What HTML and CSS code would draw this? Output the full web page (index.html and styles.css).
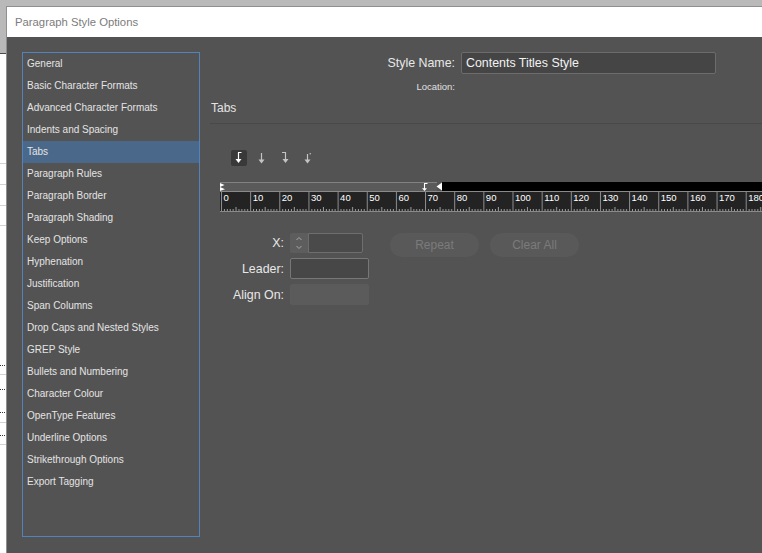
FILE: index.html
```html
<!DOCTYPE html>
<html>
<head>
<meta charset="utf-8">
<title>Paragraph Style Options</title>
<link rel="stylesheet" href="styles.css">
</head>
<body>
<div class="screen">
  <div class="doc">
    <svg width="6" height="500" viewBox="0 0 6 500">
      <rect x="0" y="0" width="6" height="1" fill="#4a4a4a"/>
      <rect x="0" y="110" width="6" height="1" fill="#d2d2d2"/>
      <rect x="0" y="131" width="6" height="1" fill="#d2d2d2"/>
      <rect x="0" y="152" width="6" height="1" fill="#d2d2d2"/>
      <rect x="0" y="172" width="6" height="1" fill="#d2d2d2"/>
      <line x1="0" y1="312.5" x2="6" y2="312.5" stroke="#333" stroke-dasharray="1 1"/>
      <rect x="0" y="321" width="6" height="1" fill="#d2d2d2"/>
      <line x1="0" y1="336.5" x2="6" y2="336.5" stroke="#333" stroke-dasharray="1 1"/>
      <line x1="0" y1="359.5" x2="6" y2="359.5" stroke="#333" stroke-dasharray="1 1"/>
      <rect x="0" y="369" width="6" height="1" fill="#d2d2d2"/>
      <line x1="0" y1="382.5" x2="6" y2="382.5" stroke="#333" stroke-dasharray="1 1"/>
      <rect x="0" y="391" width="6" height="1" fill="#d2d2d2"/>
    </svg>
  </div>
  <div class="dialog">
    <div class="titlebar">Paragraph Style Options</div>
    <div class="body">
      <ul class="nav">
        <li>General</li>
        <li>Basic Character Formats</li>
        <li>Advanced Character Formats</li>
        <li>Indents and Spacing</li>
        <li class="sel">Tabs</li>
        <li>Paragraph Rules</li>
        <li>Paragraph Border</li>
        <li>Paragraph Shading</li>
        <li>Keep Options</li>
        <li>Hyphenation</li>
        <li>Justification</li>
        <li>Span Columns</li>
        <li>Drop Caps and Nested Styles</li>
        <li>GREP Style</li>
        <li>Bullets and Numbering</li>
        <li>Character Colour</li>
        <li>OpenType Features</li>
        <li>Underline Options</li>
        <li>Strikethrough Options</li>
        <li>Export Tagging</li>
      </ul>
      <div class="panel">
        <div class="name-row">
          <span class="lbl">Style Name:</span>
          <div class="name-field">Contents Titles Style</div>
        </div>
        <div class="loc-row"><span class="loc">Location:</span></div>
        <div class="section">Tabs</div>
        <div class="sep"></div>
        <div class="tabtools">
          <span class="tool on">
            <svg width="16" height="16" viewBox="0 0 16 16">
              <path d="M7.5 2.5 V10 M7 2.5 H10.5" stroke="#fff" stroke-width="1.2" fill="none"/>
              <polygon points="4.5,9 10.5,9 7.5,13" fill="#fff"/>
            </svg>
          </span>
          <span class="tool">
            <svg width="16" height="16" viewBox="0 0 16 16">
              <path d="M7.5 3 V10" stroke="#c4c4c4" stroke-width="1.2" fill="none"/>
              <polygon points="4.5,9.5 10.5,9.5 7.5,13.5" fill="#c4c4c4"/>
            </svg>
          </span>
          <span class="tool">
            <svg width="16" height="16" viewBox="0 0 16 16">
              <path d="M8.5 2.5 V10 M5 2.5 H9" stroke="#c4c4c4" stroke-width="1.2" fill="none"/>
              <polygon points="5.5,9 11.5,9 8.5,13" fill="#c4c4c4"/>
            </svg>
          </span>
          <span class="tool">
            <svg width="16" height="16" viewBox="0 0 16 16">
              <path d="M7.5 4 V10" stroke="#c4c4c4" stroke-width="1.2" fill="none"/>
              <rect x="9.6" y="3" width="1.2" height="1.4" fill="#c4c4c4"/>
              <polygon points="4.5,9.5 10.5,9.5 7.5,13.5" fill="#c4c4c4"/>
            </svg>
          </span>
        </div>
        <svg class="ruler" width="542" height="30" viewBox="0 0 542 30">
          <defs>
            <pattern id="ticks" x="1" y="0" width="29.15" height="30" patternUnits="userSpaceOnUse">
              <rect x="0" y="9" width="1" height="21" fill="#8e8e8e"/>
              <rect x="2.9" y="27" width="1" height="2" fill="#a0a0a0"/>
              <rect x="5.8" y="27" width="1" height="2" fill="#a0a0a0"/>
              <rect x="8.7" y="27" width="1" height="2" fill="#a0a0a0"/>
              <rect x="11.6" y="27" width="1" height="2" fill="#a0a0a0"/>
              <rect x="14.5" y="25" width="1" height="4" fill="#a0a0a0"/>
              <rect x="17.4" y="27" width="1" height="2" fill="#a0a0a0"/>
              <rect x="20.3" y="27" width="1" height="2" fill="#a0a0a0"/>
              <rect x="23.2" y="27" width="1" height="2" fill="#a0a0a0"/>
              <rect x="26.1" y="27" width="1" height="2" fill="#a0a0a0"/>
            </pattern>
          </defs>
          <rect x="0" y="0" width="217" height="9" fill="#5a5a5a"/>
          <rect x="0" y="0" width="217" height="1" fill="#828282"/>
          <rect x="222" y="0" width="320" height="9" fill="#000"/>
          <rect x="0" y="9" width="542" height="1" fill="#8a8a8a"/>
          <rect x="0" y="10" width="542" height="20" fill="#232323"/>
          <rect x="0" y="10" width="542" height="20" fill="url(#ticks)"/>
          <rect x="0" y="29" width="542" height="1" fill="#8a8a8a"/>
          <g class="nums">
            <text x="3.5" y="19">0</text>
            <text x="32.65" y="19">10</text>
            <text x="61.8" y="19">20</text>
            <text x="90.95" y="19">30</text>
            <text x="120.1" y="19">40</text>
            <text x="149.25" y="19">50</text>
            <text x="178.4" y="19">60</text>
            <text x="207.55" y="19">70</text>
            <text x="236.7" y="19">80</text>
            <text x="265.85" y="19">90</text>
            <text x="295" y="19">100</text>
            <text x="324.15" y="19">110</text>
            <text x="353.3" y="19">120</text>
            <text x="382.45" y="19">130</text>
            <text x="411.6" y="19">140</text>
            <text x="440.75" y="19">150</text>
            <text x="469.9" y="19">160</text>
            <text x="499.05" y="19">170</text>
            <text x="528.2" y="19">180</text>
          </g>
          <polygon points="0,1 4.5,3 0,5" fill="#fff"/>
          <polygon points="0,5 5,7.2 0,9" fill="#fff"/>
          <path d="M204.5 1.5 V7 M204 1.5 H207.5" stroke="#fff" stroke-width="1.1" fill="none"/>
          <polygon points="202,6.2 207,6.2 204.5,9" fill="#fff"/>
          <polygon points="216.5,4.5 222,0.5 222,8.5" fill="#fff"/>
        </svg>
        <div class="form">
          <div class="fields">
            <span class="flbl">X:</span>
            <div class="xfield">
              <span class="spin">
                <svg width="18" height="20" viewBox="0 0 18 20">
                  <path d="M6.5 7 L9 4.5 L11.5 7" stroke="#a9a9a9" stroke-width="1" fill="none"/>
                  <path d="M6.5 13 L9 15.5 L11.5 13" stroke="#a9a9a9" stroke-width="1" fill="none"/>
                </svg>
              </span>
              <span class="xinput"></span>
            </div>
            <span class="flbl">Leader:</span>
            <span class="input"></span>
            <span class="flbl">Align On:</span>
            <span class="input disabled"></span>
          </div>
          <div class="buttons">
            <span class="btn">Repeat</span>
            <span class="btn">Clear All</span>
          </div>
        </div>
      </div>
    </div>
  </div>
</div>
</body>
</html>
```
FILE: styles.css
```css
html, body {
  margin: 0;
  padding: 0;
}
body {
  background: #b9b9b9;
  overflow: hidden;
  font-family: "Liberation Sans", Arial, sans-serif;
}
.screen {
  display: flex;
  width: 762px;
  height: 553px;
  overflow: hidden;
}
.doc {
  width: 6px;
  flex: none;
  margin-top: 53px;
  background: #fff;
  overflow: hidden;
}
.doc svg {
  display: block;
}
.dialog {
  flex: 1;
  min-width: 0;
  margin-top: 6px;
  border-top: 1px solid #8f8f8f;
  border-left: 1px solid #8f8f8f;
  display: flex;
  flex-direction: column;
}
.titlebar {
  height: 30px;
  flex: none;
  background: #fff;
  color: #7c7c7c;
  font-size: 11.3px;
  padding-left: 8px;
  display: flex;
  align-items: center;
}
.body {
  flex: 1;
  background: #535353;
  display: flex;
  gap: 10px;
  padding: 15px 0 0 15px;
  color: #e6e6e6;
  min-width: 0;
}
.nav {
  list-style: none;
  margin: 0;
  padding: 0;
  width: 176px;
  height: 483px;
  flex: none;
  border: 1px solid #5283ba;
}
.nav li {
  height: 22px;
  line-height: 22px;
  padding-left: 4px;
  font-size: 10px;
  color: #e4e4e4;
  white-space: nowrap;
}
.nav li.sel {
  background: #4a6889;
}
.panel {
  flex: 1;
  min-width: 0;
  display: flex;
  flex-direction: column;
}
.name-row {
  display: grid;
  grid-template-columns: 245px 255px;
  column-gap: 6px;
  align-items: center;
}
.lbl {
  text-align: right;
  font-size: 12.4px;
  color: #e8e8e8;
}
.name-field {
  height: 20px;
  line-height: 20px;
  background: #454545;
  border: 1px solid #6c6c6c;
  border-radius: 2px;
  padding-left: 4px;
  font-size: 12.4px;
  color: #f2f2f2;
}
.loc-row {
  display: grid;
  grid-template-columns: 245px;
  margin-top: 7px;
}
.loc {
  text-align: right;
  font-size: 9.5px;
  line-height: 12px;
  color: #e0e0e0;
}
.section {
  margin-top: 7px;
  font-size: 12px;
  line-height: 16px;
  padding-left: 1px;
  color: #e4e4e4;
}
.sep {
  margin-top: 7px;
  height: 1px;
  background: #484848;
}
.tabtools {
  margin-top: 26px;
  height: 16px;
  display: flex;
  gap: 7px;
  padding-left: 21px;
}
.tool {
  width: 16px;
  height: 16px;
  display: block;
}
.tool svg {
  display: block;
}
.tool.on {
  background: #393939;
  border-radius: 2px;
}
.ruler {
  display: block;
  margin-top: 16px;
  margin-left: 10px;
  flex: none;
}
.nums text {
  font-family: "Liberation Sans", Arial, sans-serif;
  font-size: 9.5px;
  fill: #ffffff;
}
.form {
  margin-top: 21px;
  display: flex;
  align-items: flex-start;
}
.fields {
  display: grid;
  grid-template-columns: 74px 79px;
  column-gap: 6px;
  row-gap: 5px;
  align-items: center;
}
.flbl {
  text-align: right;
  font-size: 12.4px;
  color: #e8e8e8;
}
.xfield {
  display: flex;
  height: 20px;
}
.spin {
  width: 18px;
  height: 20px;
  background: #5d5d5d;
  border-radius: 2px 0 0 2px;
  display: block;
}
.spin svg {
  display: block;
}
.xinput {
  width: 53px;
  height: 18px;
  background: #4a4a4a;
  border: 1px solid #6e6e6e;
  border-radius: 0 2px 2px 0;
  display: block;
}
.input {
  height: 19px;
  background: #474747;
  border: 1px solid #777777;
  border-radius: 2px;
  display: block;
}
.input.disabled {
  background: #5b5b5b;
  border-color: #5b5b5b;
}
.buttons {
  display: flex;
  gap: 11px;
  margin-left: 21px;
}
.btn {
  width: 89px;
  height: 24px;
  border-radius: 12px;
  background: #595959;
  color: #7b7b7b;
  font-size: 12px;
  display: flex;
  align-items: center;
  justify-content: center;
}
```
